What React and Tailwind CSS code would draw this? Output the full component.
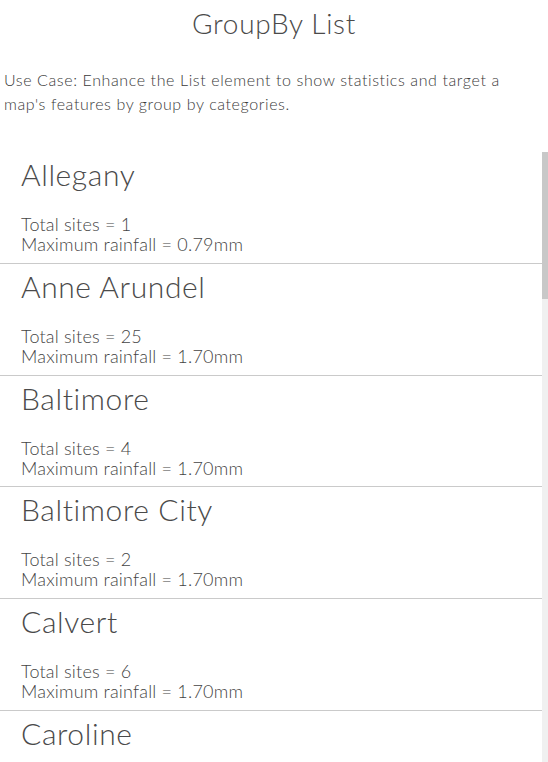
const groups = [
  { name: "Allegany", sites: 1, max: "0.79" },
  { name: "Anne Arundel", sites: 25, max: "1.70" },
  { name: "Baltimore", sites: 4, max: "1.70" },
  { name: "Baltimore City", sites: 2, max: "1.70" },
  { name: "Calvert", sites: 6, max: "1.70" },
  { name: "Caroline", sites: 3, max: "1.70" },
  { name: "Carroll", sites: 2, max: "1.70" },
  { name: "Cecil", sites: 3, max: "1.70" },
  { name: "Charles", sites: 5, max: "1.70" },
  { name: "Dorchester", sites: 4, max: "1.70" },
  { name: "Frederick", sites: 3, max: "1.70" },
  { name: "Garrett", sites: 1, max: "0.79" },
  { name: "Harford", sites: 4, max: "1.70" },
  { name: "Howard", sites: 3, max: "1.70" },
  { name: "Kent", sites: 2, max: "1.70" },
  { name: "Montgomery", sites: 6, max: "1.70" },
  { name: "Prince George's", sites: 9, max: "1.70" },
  { name: "Queen Anne's", sites: 3, max: "1.70" },
  { name: "St. Mary's", sites: 4, max: "1.70" },
  { name: "Somerset", sites: 2, max: "1.70" },
  { name: "Talbot", sites: 3, max: "1.70" },
  { name: "Washington", sites: 2, max: "1.70" },
  { name: "Wicomico", sites: 3, max: "1.70" },
];

export default function App() {
  return (
    <div className="flex h-[762px] flex-col overflow-hidden bg-white font-['Lato',sans-serif] font-light text-[#4a4a4a]">
      <h1 className="pt-[5px] text-center text-[28px] leading-[36px] tracking-[0.7px]">GroupBy List</h1>

      <p className="mt-[27px] px-1 text-base leading-6 tracking-[0.6px] text-[#3a3a3a]">
        Use Case: Enhance the List element to show statistics and target a map's features by group by categories.
      </p>

      {/* grouped list with a thin scrollbar */}
      <div className="mt-[36px] flex min-h-0 flex-1">
        <div className="min-w-0 flex-1 overflow-hidden">
          {groups.map((g) => (
            <div key={g.name} className="h-[111.75px] border-b border-[#cacaca] px-[21px] pt-[3px]">
              <div className="text-[30px] leading-[38px] tracking-[0.6px]">{g.name}</div>
              <div className="mt-[21px] text-[18px] leading-5 tracking-[0.2px] text-[#444]">
                <div>Total sites = {g.sites}</div>
                <div>Maximum rainfall = {g.max}mm</div>
              </div>
            </div>
          ))}
        </div>
        <div className="flex w-[6px] flex-col bg-[#f0f0f0]">
          <div className="h-[147px] bg-[#c8c8c8]" />
        </div>
      </div>
    </div>
  );
}
